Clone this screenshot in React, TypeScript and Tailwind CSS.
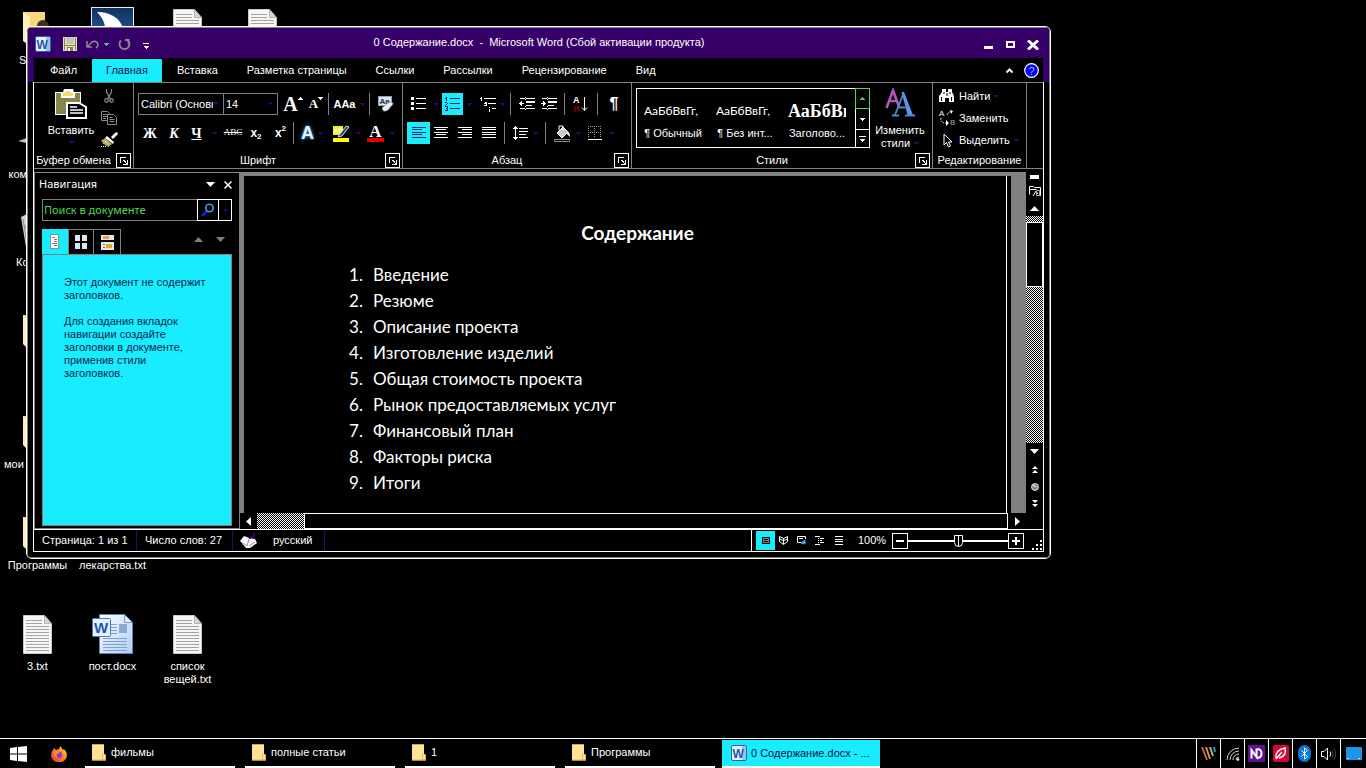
import React, { useState } from 'react';

const UI = 'font-["Liberation_Sans",Arial,sans-serif]';

const TABS = ['Файл', 'Главная', 'Вставка', 'Разметка страницы', 'Ссылки', 'Рассылки', 'Рецензирование', 'Вид'];

const CONTENTS = [
  'Введение',
  'Резюме',
  'Описание проекта',
  'Изготовление изделий',
  'Общая стоимость проекта',
  'Рынок предоставляемых услуг',
  'Финансовый план',
  'Факторы риска',
  'Итоги',
];

const FOLDERS = ['фильмы', 'полные статьи', '1', 'Программы'];

/* ---------- small shared parts ---------- */

const Caret = ({ className = 'text-[#37006e]' }: { className?: string }) => (
  <svg width="5" height="3" viewBox="0 0 5 3" className={`shrink-0 ${className}`} shapeRendering="crispEdges">
    <path d="M0 0h5v1h-1v1h-1v1h-1v-1h-1v-1h-1z" fill="currentColor" />
  </svg>
);

const Tri = ({ up = false, className = 'text-white' }: { up?: boolean; className?: string }) => (
  <svg width="9" height="5" viewBox="0 0 9 5" className={`shrink-0 ${className}`}>
    <path d={up ? 'M0 5L4.500 0L9 5z' : 'M0 0h9L4.500 5z'} fill="currentColor" />
  </svg>
);

const Sep = () => <span className="h-[22px] w-px shrink-0 bg-[#808080]" />;

const Tool = ({ label, className = '', children }: { label: string; className?: string; children: React.ReactNode }) => (
  <button aria-label={label} className={`flex h-[22px] shrink-0 items-center justify-center ${className}`}>
    {children}
  </button>
);

const Launcher = () => (
  <button aria-label="Параметры" className="absolute right-[2px] top-0 flex size-[15px] items-center justify-center border border-white">
    <svg width="8" height="8" viewBox="0 0 8 8" shapeRendering="crispEdges" fill="#fff">
      <path d="M0 0h6v1h-5v5h-1zM3 3h2v1h-2zM4 4h2v1h-2zM5 5h1v1h-1zM7 3h1v5h-5v-1h3v-1h1z" />
    </svg>
  </button>
);

const Group = ({ title, launcher = true, className, children }: { title: string; launcher?: boolean; className: string; children: React.ReactNode }) => (
  <section aria-label={title} className={`flex h-[85px] shrink-0 flex-col border-r border-[#808080] ${className}`}>
    <div className="h-[70px]">{children}</div>
    <div className={`relative h-[15px] text-center leading-[14px] ${launcher ? 'pr-[20px]' : ''}`}>
      {title}
      {launcher && <Launcher />}
    </div>
  </section>
);

/* ---------- icons ---------- */

const WordIcon = () => (
  <svg width="16" height="16" viewBox="0 0 16 16" className="shrink-0">
    <rect x="0.500" y="0.500" width="15" height="15" rx="1.500" fill="#e9f2fc" stroke="#2b62b4" />
    <path d="M11 1h4v14h-4z" fill="#9fc0ea" />
    <text x="1.500" y="12.500" fontSize="12" fontWeight="700" fontFamily="Liberation Sans, Arial, sans-serif" fill="#1c57b0">W</text>
  </svg>
);

const FolderIcon = () => (
  <svg width="14" height="17" viewBox="0 0 14 17" className="shrink-0">
    <path d="M0 0.500h12v10h1.500v6H0z" fill="#f7d977" />
    <path d="M0 0.500h12v15.500H1z" fill="#ffe594" />
    <path d="M10.500 10.500h3v5.500h-3z" fill="#ffe9a8" stroke="#d9b34a" strokeWidth="0.800" />
    <path d="M0 16h13.500" stroke="#d9b34a" />
  </svg>
);

const BigFolder = () => (
  <svg width="29" height="36" viewBox="0 0 29 36">
    <path d="M0 1h22v20h6v14H5z" fill="#f8d67c" />
    <path d="M0 1l5 3v31l-5-5z" fill="#fff0b8" />
  </svg>
);

const UserFolder = () => (
  <svg width="29" height="36" viewBox="0 0 29 36">
    <path d="M0 1h22v20h6v14H5z" fill="#f8d67c" />
    <path d="M0 1l7 5v29l-7-5z" fill="#fff0b8" />
    <circle cx="20" cy="15" r="6" fill="#3a3029" />
    <path d="M16 16h9v6h-9z" fill="#c99368" />
  </svg>
);

const TextFile = () => (
  <svg width="29" height="39" viewBox="0 0 29 39">
    <path d="M0.500 0.500h21l7 8v30h-28z" fill="#f6f6f4" stroke="#c9c9c7" />
    <path d="M21.500 0.500v8h7z" fill="#d5d5d3" stroke="#9d9d9b" strokeWidth="0.700" />
    <path d="M3 5.500h16M3 8.500h16M3 11.500h23M3 14.500h23M3 17.500h23M3 20.500h23M3 23.500h23M3 26.500h23M3 29.500h23M3 32.500h23M3 35.500h23" stroke="#a2a2a0" />
  </svg>
);

const DocFile = () => (
  <svg width="42" height="41" viewBox="0 0 42 41">
    <defs>
      <linearGradient id="docpage" x1="0" y1="0" x2="1" y2="1">
        <stop offset="0" stopColor="#fff" />
        <stop offset="1" stopColor="#aecdf5" />
      </linearGradient>
    </defs>
    <path d="M7.500 0.500h25l8 8v31h-33z" fill="url(#docpage)" stroke="#5d83b8" />
    <path d="M32.500 0.500v8h8z" fill="#dceafc" stroke="#7f9fc9" />
    <path d="M19 10.500h6M19 13.500h6M19 16.500h6M19 19.500h6M11 24.500h24M11 27.500h24M11 30.500h24M11 33.500h24M11 36.500h24" stroke="#7f9fd0" />
    <rect x="27" y="10" width="8" height="9" fill="#8caad6" />
    <rect x="0.500" y="4.500" width="18" height="18" rx="1" fill="#e6f0fc" stroke="#4f7cc0" />
    <text x="2" y="18.500" fontSize="15" fontWeight="700" fontFamily="Liberation Sans, Arial, sans-serif" fill="#1c57b0">W</text>
  </svg>
);

const SharkIcon = () => (
  <svg width="43" height="43" viewBox="0 0 43 43">
    <defs>
      <linearGradient id="fin" x1="0" y1="0" x2="0" y2="1">
        <stop offset="0" stopColor="#10315f" />
        <stop offset="1" stopColor="#2f6cb0" />
      </linearGradient>
    </defs>
    <rect x="0.500" y="0.500" width="42" height="42" fill="url(#fin)" stroke="#e8eef5" />
    <path d="M6 5c13 0 23 6 26 16c0 4 2 8 6 12H14C16 20 13 12 6 5z" fill="#fff" />
  </svg>
);

const ComputerIcon = () => (
  <svg width="40" height="36" viewBox="0 0 40 36">
    <path d="M0 29l12-4v7z" fill="#b9bcc0" />
  </svg>
);

const BinIcon = () => (
  <svg width="34" height="36" viewBox="0 0 34 36">
    <path d="M0 4l6-3h20l8 3l-4 30H5z" fill="#cfd2d6" />
    <path d="M3 12l6 2l-1 8z" fill="#4f93d1" />
    <path d="M2 6l4 26" stroke="#8b8f94" />
  </svg>
);

const PasteIcon = () => (
  <svg width="32" height="30" viewBox="0 0 32 30">
    <path d="M0 3h8l1-3h9l1 3h7v23H0z" fill="#fff" />
    <path d="M1 4h24v21H1z" fill="#87854b" />
    <path d="M6 4h14v5H6z" fill="#fff" />
    <path d="M8 5q5-6 10 0v2H8z" fill="#f2dc6a" />
    <path d="M12 14h12l7 4v11H12z" fill="#000" stroke="#fff" strokeWidth="2" />
    <path d="M15 18h7M15 21h13M15 24h13" stroke="#fff" strokeWidth="1.500" />
  </svg>
);

const CutIcon = () => (
  <svg width="10" height="15" viewBox="0 0 10 15" fill="none" stroke="#8a8a8a" strokeWidth="1.200">
    <path d="M2.500 0v3l4 7M7.500 0v3l-4 7" />
    <circle cx="2.500" cy="11.500" r="1.800" />
    <circle cx="7.500" cy="11.500" r="1.800" />
  </svg>
);

const CopyIcon = () => (
  <svg width="16" height="14" viewBox="0 0 16 14" fill="#000" stroke="#8a8a8a">
    <path d="M0.500 0.500h6l2 2v7h-8z" />
    <path d="M2 3.500h4M2 5.500h4M2 7.500h3" />
    <path d="M6.500 3.500h6l3 3v7h-9z" />
    <path d="M8.500 6.500h3M8.500 8.500h5M8.500 10.500h5" />
  </svg>
);

const BrushIcon = () => (
  <svg width="17" height="16" viewBox="0 0 17 16">
    <path d="M10 5l4-4l2-1l1 2l-5 5z" fill="#fff" />
    <path d="M6 4l7 6l-1 2l-8-6z" fill="#fff" />
    <path d="M4 6l7 6l-4 3L0 9z" fill="#b8ae67" />
    <path d="M0 14.500h5M2 11l3 2M4 9l3 3" stroke="#fff" strokeDasharray="1 1" />
  </svg>
);

const SaveIcon = () => (
  <svg width="14" height="14" viewBox="0 0 14 14" shapeRendering="crispEdges">
    <path d="M0 0h14v14H0z" fill="#e7e3b8" />
    <path d="M1 1h1v12H1zM12 1h1v12h-1z" fill="#87854b" />
    <path d="M3 0h8v7H3z" fill="#c4c4c4" />
    <path d="M2 8h10v1H2z" fill="#87854b" />
    <path d="M4 10h6v4H4z" fill="#87854b" />
    <path d="M5 11h2v3H5z" fill="#fff" />
  </svg>
);

const ListIcon = ({ numbered = false }: { numbered?: boolean }) => (
  <svg width="15" height="14" viewBox="0 0 15 14" fill="currentColor" shapeRendering="crispEdges">
    {numbered ? (
      <path d="M1 0h1v4h-1zM0 1h1v1H0zM0 5h2v1h1v1h-1v1h-1v1h2v1H0v-2h1v-1h1v-1H0zM0 10h3v4H0v-1h2v-1H1v-1h1v-1H0z" />
    ) : (
      <path d="M0 0h3v3H0zM0 5h3v3H0zM0 10h3v3H0z" />
    )}
    <path d="M5 1h10v1H5zM5 6h10v1H5zM5 11h10v1H5z" />
  </svg>
);

const MultiIcon = () => (
  <svg width="16" height="15" viewBox="0 0 16 15" fill="#fff" shapeRendering="crispEdges">
    <path d="M1 0h1v4H1zM0 1h1v1H0zM4 1h12v1H4zM4 5h3v4H4v-1h2v-1H4v-1h2zM8 6h8v1H8zM9 10h1v1H9zM9 12h1v3H9zM12 11h4v1h-4z" />
  </svg>
);

const IndentIcon = ({ right = false }: { right?: boolean }) => (
  <svg width="16" height="14" viewBox="0 0 16 14" fill="#fff" shapeRendering="crispEdges" className="shrink-0">
    <path d="M1 1h5v1H1zM7 1h9v1H7zM7 4h9v2H7zM7 8h6v1H7zM1 11h5v1H1zM7 11h9v1H7zM6 0h1v1H6zM6 2h1v1H6zM6 9h1v1H6zM6 12h1v1H6z" />
    <path d={right ? 'M0 6h2V4h1v1h1v1h1v1H4v1H3v1H2V7H0z' : 'M5 6H3V4H2v1H1v1H0v1h1v1h1v1h1V7h2z'} />
  </svg>
);

const AlignIcon = ({ d }: { d: string }) => (
  <svg width="14" height="12" viewBox="0 0 14 12" stroke="currentColor" shapeRendering="crispEdges">
    <path d={d} />
  </svg>
);

const SpacingIcon = () => (
  <svg width="16" height="14" viewBox="0 0 16 14" fill="#fff" shapeRendering="crispEdges">
    <path d="M2 0h1v1h1v1h1v1H3v8h2v1H4v1H3v1H2v-1H1v-1H0v-1h2V3H0V2h1V1h1zM6 2h9v1H6zM6 5h9v1H6zM6 8h7v1H6zM6 11h9v1H6z" />
  </svg>
);

const BucketIcon = () => (
  <svg width="17" height="17" viewBox="0 0 17 17">
    <path d="M3 8l6-6l5 5l-6 6z" fill="#ccc" stroke="#fff" />
    <path d="M5 5V1h4v4" fill="none" stroke="#fff" />
    <path d="M13 6q3 1 3 6l-3-3z" fill="#fff" />
    <path d="M0.500 14.500h15v2h-15z" fill="#000" stroke="#8a8a8a" />
  </svg>
);

const BordersIcon = () => (
  <svg width="14" height="14" viewBox="0 0 14 14" stroke="#9a9a9a" fill="none" shapeRendering="crispEdges">
    <path d="M0 0.500h14M0 6.500h14M0.500 0v12M6.500 0v12M12.500 0v12" strokeDasharray="1 1" />
    <path d="M0 13.500h14" stroke="#fff" />
  </svg>
);

const ClearIcon = () => (
  <svg width="16" height="16" viewBox="0 0 16 16">
    <rect x="0.500" y="0.500" width="13" height="9" fill="#d8e4f2" stroke="#8da3bd" />
    <text x="1.500" y="8" fontSize="8" fontWeight="700" fontFamily="Liberation Sans, Arial, sans-serif" fill="#1d2d45">Aa</text>
    <path d="M4 12l6-5q5-2 5 1l-5 6q-5 3-6-2z" fill="#e8eef5" stroke="#8fa0b5" strokeWidth="0.700" />
  </svg>
);

const MarkerIcon = () => (
  <svg width="17" height="17" viewBox="0 0 17 17">
    <path d="M0 1h10v9H0z" fill="#f5f500" />
    <text x="1" y="8" fontSize="8" fontWeight="700" fontFamily="Liberation Sans, Arial, sans-serif" fill="#fff">ab</text>
    <path d="M6 10l7-9l3 1l-7 9l-4 1z" fill="#33506f" stroke="#fff" strokeWidth="0.800" />
    <path d="M0 13h16v4H0z" fill="#ffff00" />
  </svg>
);

const SortIcon = () => (
  <svg width="16" height="17" viewBox="0 0 16 17" className="overflow-visible">
    <text x="0" y="7" fontSize="9" fontWeight="700" fontFamily="Liberation Sans, Arial, sans-serif" fill="#fff">А</text>
    <text x="0" y="16" fontSize="9" fontWeight="700" fontFamily="Liberation Sans, Arial, sans-serif" fill="#8b0000">Я</text>
    <path d="M11.500 1v13M9 11.500l2.500 3l2.500-3" stroke="#fff" fill="none" />
  </svg>
);

const BinocularsIcon = () => (
  <svg width="16" height="14" viewBox="0 0 16 14" fill="#fff">
    <path d="M3 0h4v3h2V0h4v3l2 4v6h-5V9H6v4H0V7l3-4z" />
    <path d="M5 3v2M11 3v2M2.500 8v4M12.500 8v4M8 4v3" stroke="#000" />
  </svg>
);

const ReplaceIcon = () => (
  <svg width="17" height="16" viewBox="0 0 17 16" className="overflow-visible">
    <text x="0" y="6" fontSize="8" fontFamily="Liberation Sans, Arial, sans-serif" fill="#fff">A</text>
    <text x="11" y="15" fontSize="8" fontFamily="Liberation Sans, Arial, sans-serif" fill="#aaa">B</text>
    <path d="M8 5q2-4 4-3M2 8q-1 5 5 5" stroke="#fff" fill="none" strokeDasharray="1.500 1" />
    <path d="M11 0l3 1l-2 3zM7 10l3 3l-3 3z" fill="#fff" />
  </svg>
);

const CursorIcon = () => (
  <svg width="10" height="15" viewBox="0 0 10 15">
    <path d="M1 1v11l2.500-2.500l2 4.500l2-1l-2-4h3.500z" fill="#000" stroke="#fff" />
  </svg>
);

// Two overlapping capitals: a thin violet one behind a heavy blue serif one
const ChangeStylesIcon = () => (
  <svg width="30" height="30" viewBox="0 0 30 30" fill="none">
    <path d="M1.500 20L8 2.500L14.500 20M4 13h8.500" stroke="#b455b8" strokeWidth="2.600" />
    <path d="M10 27L18 6.500" stroke="#4f86d0" strokeWidth="1.800" />
    <path d="M16.500 4h2.500L28 27h-5.500z" fill="#5b96e0" />
    <path d="M13 19.500h9M7 27.500h7M20 27.500h10" stroke="#4f86d0" strokeWidth="1.800" />
  </svg>
);

const HelpIcon = () => (
  <svg width="15" height="15" viewBox="0 0 15 15">
    <circle cx="7.500" cy="7.500" r="6.800" fill="#0000f0" stroke="#fff" strokeWidth="1.200" />
    <text x="4.500" y="11.500" fontSize="11" fontFamily="Liberation Sans, Arial, sans-serif" fill="#9fb4ff">?</text>
  </svg>
);

const ProofIcon = () => (
  <svg width="17" height="15" viewBox="0 0 17 15">
    <path d="M0 8l4-5l5 2l6 1l2 4l-7 5h-4z" fill="#fff" />
    <path d="M1 9l6 4l2-7M9 13l6-4" stroke="#7a62a8" fill="none" strokeWidth="0.800" />
    <path d="M9 5l4-1l2-4" stroke="#37006e" fill="none" strokeWidth="2" />
  </svg>
);

/* ---------- ribbon ---------- */

const ClipboardGroup = () => (
  <Group title="Буфер обмена" className="w-[100px]">
    <div className="flex pl-[13px]">
      <button className="flex w-[48px] flex-col items-center pt-[6px]">
        <PasteIcon />
        <span className="leading-[22px]">Вставить</span>
        <Caret />
      </button>
      <div className="flex w-[28px] flex-col items-center pt-[2px]">
        <Tool label="Вырезать"><CutIcon /></Tool>
        <Tool label="Копировать"><CopyIcon /></Tool>
        <Tool label="Формат по образцу"><BrushIcon /></Tool>
      </div>
    </div>
  </Group>
);

const Combo = ({ label, value, className }: { label: string; value: string; className: string }) => (
  <div className={`relative h-[22px] shrink-0 ${className}`}>
    <select
      aria-label={label}
      defaultValue={value}
      className="h-full w-full appearance-none overflow-hidden border border-[#808080] bg-black pl-[2px] pr-[10px] text-white outline-none"
    >
      <option>{value}</option>
    </select>
    <Caret className="pointer-events-none absolute right-[5px] top-[9px] text-[#37006e]" />
  </div>
);

const FontGroup = () => (
  <Group title="Шрифт" className="w-[269px]">
    <div className="flex flex-col gap-[7px] pl-1 pt-[10px]">
      <div className="flex items-center">
        <Combo label="Шрифт" value="Calibri (Основн" className="w-[86px]" />
        <Combo label="Размер шрифта" value="14" className="-ml-px w-[55px]" />
        <Tool label="Увеличить размер" className="ml-1 w-[22px] font-['Liberation_Serif',serif] text-[20px] font-bold">
          A<Caret className="-mt-3 rotate-180 text-white" />
        </Tool>
        <Tool label="Уменьшить размер" className="w-[24px] font-['Liberation_Serif',serif] text-[13px] font-bold">
          A<Caret className="-mt-3 text-white" />
        </Tool>
        <Sep />
        <Tool label="Регистр" className="w-[40px] gap-1 text-[11px] font-bold"><span>AAa</span><Caret /></Tool>
        <Sep />
        <Tool label="Очистить формат" className="w-[32px]"><ClearIcon /></Tool>
      </div>
      <div className="flex items-center">
        <Tool label="Полужирный" className="w-[24px] font-['Liberation_Serif',serif] text-[14px] font-bold">Ж</Tool>
        <Tool label="Курсив" className="w-[24px] font-['Liberation_Serif',serif] text-[14px] font-bold italic">К</Tool>
        <Tool label="Подчеркнутый" className="w-[36px] gap-[10px] font-['Liberation_Serif',serif] text-[14px] font-bold">
          <span className="underline">Ч</span><Caret />
        </Tool>
        <Tool label="Зачеркнутый" className="w-[22px] font-['Liberation_Serif',serif] text-[9px] line-through">ABC</Tool>
        <Tool label="Подстрочный" className="w-[24px] text-[12px] font-bold">x<span className="mt-2 text-[8px]">2</span></Tool>
        <Tool label="Надстрочный" className="w-[25px] text-[12px] font-bold">x<span className="mb-2 text-[8px]">2</span></Tool>
        <Sep />
        <Tool label="Эффекты текста" className="w-[36px] gap-1 text-[18px] font-bold text-[#e3f3ff]">
          <span className="[text-shadow:0_0_2px_#2d8fd8,0_0_4px_#2d8fd8]">A</span><Caret />
        </Tool>
        <Tool label="Выделение цветом" className="w-[34px] gap-[6px]"><MarkerIcon /><Caret /></Tool>
        <Tool label="Цвет текста" className="w-[34px] gap-[6px]">
          <span className="flex h-[17px] w-[17px] flex-col items-center border-b-4 border-[#e00000] font-['Liberation_Serif',serif] text-[17px] font-bold leading-[13px]">A</span>
          <Caret />
        </Tool>
      </div>
    </div>
  </Group>
);

const ParagraphGroup = () => (
  <Group title="Абзац" className="w-[229px]">
    <div className="flex flex-col gap-[7px] pl-1 pt-[10px]">
      <div className="flex items-center">
        <Tool label="Маркеры" className="w-[35px] gap-2"><ListIcon /><Caret /></Tool>
        <Tool label="Нумерация" className="w-[21px] bg-[#1aecff] text-[#002b66]"><ListIcon numbered /></Tool>
        <Tool label="Список" className="w-[12px]"><Caret /></Tool>
        <Tool label="Многоуровневый список" className="w-[35px] gap-1"><MultiIcon /><Caret /></Tool>
        <Sep />
        <Tool label="Уменьшить отступ" className="w-[27px] pl-1"><IndentIcon /></Tool>
        <Tool label="Увеличить отступ" className="w-[26px] pr-1"><IndentIcon right /></Tool>
        <Sep />
        <Tool label="Сортировка" className="w-[32px]"><SortIcon /></Tool>
        <Sep />
        <Tool label="Знаки" className="w-[32px] text-[16px] font-bold">¶</Tool>
      </div>
      <div className="flex items-center">
        <Tool label="По левому краю" className="w-[23px] bg-[#1aecff] text-[#002b66]">
          <AlignIcon d="M0 0.500h14M0 2.500h10M0 5.500h14M0 7.500h10M0 10.500h14" />
        </Tool>
        <Tool label="По центру" className="w-[22px]"><AlignIcon d="M0 0.500h14M2 2.500h10M0 5.500h14M2 7.500h10M0 10.500h14" /></Tool>
        <Tool label="По правому краю" className="w-[26px]"><AlignIcon d="M0 0.500h14M4 2.500h10M0 5.500h14M4 7.500h10M0 10.500h14" /></Tool>
        <Tool label="По ширине" className="w-[22px]"><AlignIcon d="M0 0.500h14M0 2.500h14M0 5.500h14M0 7.500h14M0 10.500h14" /></Tool>
        <span className="w-1" />
        <Sep />
        <Tool label="Интервал" className="w-[40px] gap-1"><SpacingIcon /><Caret /></Tool>
        <Sep />
        <Tool label="Заливка" className="w-[42px] gap-[5px]"><BucketIcon /><Caret /></Tool>
        <Tool label="Границы" className="w-[26px] gap-[7px]"><BordersIcon /><Caret /></Tool>
      </div>
    </div>
  </Group>
);

const StyleItem = ({ sample, name, className }: { sample: string; name: string; className: string }) => (
  <button className="flex w-[72px] shrink-0 flex-col items-center pt-[10px]">
    <span className={`h-[24px] w-[58px] overflow-hidden whitespace-nowrap text-left leading-[24px] ${className}`}>{sample}</span>
    <span className="leading-[20px]">{name}</span>
  </button>
);

const StylesGroup = () => (
  <Group title="Стили" className="w-[301px]">
    <div className="flex pl-1 pt-[5px]">
      <div className="flex h-[60px] w-[219px] border border-white border-r-0">
        <StyleItem sample="АаБбВвГг," name="¶ Обычный" className="font-['Lato',sans-serif] text-[12px]" />
        <StyleItem sample="АаБбВвГг," name="¶ Без инт..." className="font-['Lato',sans-serif] text-[12px]" />
        <StyleItem sample="АаБбВв" name="Заголово..." className="font-['Liberation_Serif',serif] text-[18px] font-bold" />
      </div>
      <div className="flex h-[60px] w-[15px] flex-col">
        <button aria-label="Вверх" className="flex h-[21px] items-center justify-center border border-[#4fd84f]">
          <Caret className="rotate-180 text-[#4fd84f]" />
        </button>
        <button aria-label="Вниз" className="flex h-[20px] items-center justify-center border-x border-white"><Caret className="text-white" /></button>
        <button aria-label="Ещё" className="flex h-[19px] flex-col items-center justify-center gap-[2px] border border-white">
          <span className="h-px w-[7px] bg-white" />
          <Caret className="text-white" />
        </button>
      </div>
      <button className="flex w-[60px] flex-col items-center leading-[13px]">
        <ChangeStylesIcon />
        <span className="mt-[6px]">Изменить</span>
        <span className="flex items-center gap-1">стили <Caret /></span>
      </button>
    </div>
  </Group>
);

const EditingGroup = () => (
  <Group title="Редактирование" launcher={false} className="w-[94px]">
    <div className="flex flex-col pl-[6px] pt-[2px]">
      <button className="flex h-[22px] items-center"><span className="w-[20px]"><BinocularsIcon /></span>Найти<span className="ml-1"><Caret /></span></button>
      <button className="flex h-[22px] items-center"><span className="w-[20px]"><ReplaceIcon /></span>Заменить</button>
      <button className="flex h-[22px] items-center"><span className="w-[20px] pl-1"><CursorIcon /></span>Выделить<span className="ml-1"><Caret /></span></button>
    </div>
  </Group>
);

/* ---------- window parts ---------- */

const TitleBar = () => (
  <header className="relative flex h-[30px] shrink-0 items-center bg-[#370068] pl-[7px] pt-[2px]">
    <WordIcon />
    <button aria-label="Сохранить" className="ml-3"><SaveIcon /></button>
    <button aria-label="Отменить" className="ml-[9px] flex items-center gap-[5px]">
      <svg width="13" height="9" viewBox="0 0 13 9" fill="none" stroke="#8c8c8c" strokeWidth="1.500">
        <path d="M1 1v6h5M1.500 6.500L6 2q4-2 6 2q0 3-2 4" />
      </svg>
      <Caret className="text-[#45c98a]" />
    </button>
    <button aria-label="Повторить" className="ml-[9px]">
      <svg width="13" height="13" viewBox="0 0 13 13" fill="none" stroke="#8c8c8c" strokeWidth="1.800">
        <path d="M3 2.500a5 5 0 1 0 7 0M10.500 6V2H7" />
      </svg>
    </button>
    <button aria-label="Настройка панели" className="ml-3 mt-1 flex flex-col items-center gap-[2px]">
      <span className="h-px w-[6px] bg-white" />
      <Caret className="text-white" />
    </button>
    <h1 className="flex-1 pb-1 pr-[120px] text-center">0 Содержание.docx&nbsp; -&nbsp; Microsoft Word (Сбой активации продукта)</h1>
    <div className="absolute right-[10px] top-[10px] flex items-center gap-3">
      <button aria-label="Свернуть" className="flex h-[13px] w-[10px] items-end pb-[2px]"><span className="h-[3px] w-[9px] bg-white" /></button>
      <button aria-label="Развернуть" className="h-[7px] w-[9px] border-2 border-white" />
      <button aria-label="Закрыть">
        <svg width="12" height="10" viewBox="0 0 12 10" stroke="#fff" strokeWidth="3"><path d="M1 0.500l10 9M11 0.500l-10 9" /></svg>
      </button>
    </div>
  </header>
);

const TabStrip = () => {
  const [active, setActive] = useState('Главная');
  return (
    <div className="h-6 shrink-0 bg-[#370068] px-[6px]">
      <nav className="flex h-full items-center gap-px bg-black pl-[2px] pr-1 pt-px">
        {TABS.map(t => (
          <button
            key={t}
            onClick={() => setActive(t)}
            className={`h-[23px] px-[14px] ${t === active ? 'bg-[#1aecff] text-[#101048]' : 'text-white'}`}
          >
            {t}
          </button>
        ))}
        <button aria-label="Свернуть ленту" className="ml-auto mr-[10px]">
          <svg width="7" height="5" viewBox="0 0 7 5" fill="none" stroke="#fff" strokeWidth="2"><path d="M0.500 4.500l3-3l3 3" /></svg>
        </button>
        <button aria-label="Справка"><HelpIcon /></button>
      </nav>
    </div>
  );
};

const NavPane = () => (
  <aside className="flex w-[205px] shrink-0 flex-col border-y border-l border-[#808080] pl-[7px] pr-[7px]">
    <div className="-ml-[3px] flex h-[23px] items-center font-['Noto_Sans',sans-serif]">
      <h2 className="flex-1">Навигация</h2>
      <button aria-label="Параметры области"><Tri /></button>
      <button aria-label="Закрыть область" className="ml-[9px]">
        <svg width="8" height="8" viewBox="0 0 8 8" stroke="#fff" strokeWidth="1.500"><path d="M0.500 0.500l7 7M7.500 0.500l-7 7" /></svg>
      </button>
    </div>
    <div className="mt-[3px] flex h-[22px]">
      <input
        aria-label="Поиск в документе"
        placeholder="Поиск в документе"
        className="w-0 flex-1 border border-r-0 border-[#808080] bg-black px-px font-['Noto_Sans',sans-serif] text-white outline-none placeholder:text-[#4fd84f]"
      />
      <button aria-label="Найти" className="flex w-[22px] items-center justify-center border border-white">
        <svg width="14" height="14" viewBox="0 0 14 14" fill="none">
          <path d="M1 13l5-5" stroke="#2222c8" strokeWidth="2.500" />
          <circle cx="8.500" cy="5" r="3.800" stroke="#4f9cf0" strokeWidth="1.500" />
        </svg>
      </button>
      <button aria-label="Варианты поиска" className="flex w-[13px] items-center justify-center border border-l-0 border-white"><Caret /></button>
    </div>
    <div className="mt-2 flex h-[25px]">
      <button aria-label="Заголовки" className="flex w-[26px] items-center justify-center bg-[#1aecff]">
        <svg width="10" height="15" viewBox="0 0 10 15" shapeRendering="crispEdges">
          <path d="M0.500 0.500h8v14h-8z" fill="#fff" stroke="#8d8d8d" />
          <path d="M2 3.500h3M4 5.500h3M4 7.500h3M2 9.500h5M4 11.500h3" stroke="#777" />
        </svg>
      </button>
      <button aria-label="Страницы" className="flex w-[26px] items-center justify-center border border-b-0 border-[#808080]">
        <svg width="13" height="14" viewBox="0 0 13 14" fill="#dbe6f5" shapeRendering="crispEdges"><path d="M0 0h5v6H0zM7 0h5v6H7zM0 8h5v6H0zM7 8h5v6H7z" /></svg>
      </button>
      <button aria-label="Результаты" className="flex w-[27px] items-center justify-center border border-b-0 border-l-0 border-[#808080]">
        <svg width="13" height="15" viewBox="0 0 13 15" shapeRendering="crispEdges">
          <path d="M0 0h13v5H0zM0 7h13v8H0z" fill="#e8e8ec" />
          <path d="M2 1h6v3H2zM5 9h6v4H5z" fill="#e0a437" />
          <path d="M2 9h2v1H2zM2 12h2v1H2z" fill="#777" />
        </svg>
      </button>
      <div className="ml-auto flex gap-[13px] pr-[7px] pt-2">
        <button aria-label="Предыдущий" className="h-[5px]"><Tri up className="text-[#808080]" /></button>
        <button aria-label="Следующий" className="h-[5px]"><Tri className="text-[#808080]" /></button>
      </div>
    </div>
    <div className="mb-[2px] flex-1 border border-[#808080] bg-[#1aecff] px-[21px] pt-[21px] leading-[13px] text-[#06284a]">
      <p>Этот документ не содержит заголовков.</p>
      <p className="mt-[13px] pr-4">Для создания вкладок навигации создайте заголовки в документе, применив стили заголовков.</p>
    </div>
  </aside>
);

const Checker = ({ className }: { className: string }) => (
  <span className={`block bg-[repeating-conic-gradient(#000_0_25%,#fff_0_50%)] bg-[length:2px_2px] ${className}`} />
);

const VScroll = () => (
  <div className="flex w-[17px] shrink-0 flex-col items-center">
    <span className="mt-[3px] h-1 w-[9px] shrink-0 bg-white" />
    <button aria-label="Линейка" className="mt-[6px] shrink-0">
      <svg width="12" height="12" viewBox="0 0 12 12" fill="none" stroke="#fff"><path d="M0.500 9.500v-8h4l1 1h6v8h-3M0.500 4.500h7M4 11l3-5l2 3" /><path d="M7.500 5.500h3v5h-3z" stroke="#aaa" /></svg>
    </button>
    <button aria-label="Прокрутить вверх" className="flex h-[19px] shrink-0 items-center pt-1"><Tri up /></button>
    <Checker className="h-[6px] w-full shrink-0" />
    <span className="h-[65px] w-full shrink-0 border border-white" />
    <Checker className="w-full flex-1" />
    <button aria-label="Прокрутить вниз" className="flex h-[17px] shrink-0 items-center"><Tri /></button>
    <div className="flex h-[53px] shrink-0 flex-col items-center justify-between pb-[6px] pt-[6px]">
      <button aria-label="Предыдущая страница">
        <svg width="6" height="8" viewBox="0 0 6 8" fill="#fff"><path d="M3 0l3 3H0zM3 4l3 3H0z" /></svg>
      </button>
      <button aria-label="Объект перехода">
        <svg width="8" height="8" viewBox="0 0 8 8"><circle cx="4" cy="4" r="3.500" fill="#8a8a8a" stroke="#fff" strokeWidth="0.800" /><path d="M2 2l3 2" stroke="#fff" /></svg>
      </button>
      <button aria-label="Следующая страница">
        <svg width="6" height="8" viewBox="0 0 6 8" fill="#fff"><path d="M0 1h6l-3 3zM0 5h6l-3 3z" /></svg>
      </button>
    </div>
    <span className="h-4 shrink-0" />
  </div>
);

const DocumentArea = () => (
  <main className="flex min-w-0 flex-1 flex-col">
    <div className="flex min-h-0 flex-1 border-l-[5px] border-t-4 border-[#808080]">
      <article className="min-w-0 flex-1 overflow-hidden border-r border-white pl-[105px] font-['Lato',sans-serif]">
        <h2 className="pr-[80px] pt-[44px] text-center text-[19px] font-bold leading-[26px]">Содержание</h2>
        <ol className="mt-4 text-[17px] leading-[26px]">
          {CONTENTS.map((item, i) => (
            <li key={item} className="flex"><span className="w-6 shrink-0">{i + 1}.</span>{item}</li>
          ))}
        </ol>
      </article>
      <span className="w-1" />
      <span className="w-[15px] bg-[#808080]" />
    </div>
    <div className="flex h-4 shrink-0 border-l border-[#808080]">
      <button aria-label="Прокрутить влево" className="flex w-[17px] items-center justify-center">
        <svg width="5" height="9" viewBox="0 0 5 9" fill="#fff"><path d="M5 0v9L0 4.500z" /></svg>
      </button>
      <Checker className="w-[47px]" />
      <span className="flex-1 border border-white" />
      <button aria-label="Прокрутить вправо" className="flex w-[18px] items-center justify-center">
        <svg width="5" height="9" viewBox="0 0 5 9" fill="#fff"><path d="M0 0v9l5-4.500z" /></svg>
      </button>
    </div>
  </main>
);

const StatusBar = () => {
  const [zoom, setZoom] = useState(50);
  return (
    <footer className="flex h-[22px] shrink-0 items-center border-t border-white">
      <span className="h-full w-[103px] border-r border-[#37006e] pl-2 leading-[21px]">Страница: 1 из 1</span>
      <span className="h-full w-[96px] border-r border-[#37006e] pl-2 leading-[21px]">Число слов: 27</span>
      <span className="flex h-full w-[92px] items-center gap-4 border-r border-[#37006e] pl-[7px]"><ProofIcon />русский</span>
      <div className="ml-auto flex h-full items-center border-l border-white pl-1">
        <button aria-label="Разметка страницы" className="flex h-[19px] w-[19px] items-center justify-center bg-[#1aecff]">
          <svg width="8" height="7" viewBox="0 0 8 7" shapeRendering="crispEdges"><path d="M0.500 0.500h7v6h-7z" fill="#777" stroke="#111" /><path d="M2 2.500h4M2 4.500h4" stroke="#111" /></svg>
        </button>
        <div className="flex items-center gap-[9px] pl-[4px]">
          <button aria-label="Режим чтения">
            <svg width="9" height="9" viewBox="0 0 9 9" fill="none" stroke="#fff"><path d="M0.500 0.500l4 2l4-2v5l-4 3l-4-3zM4.500 2v6M1 3l3 1.500M8 3l-3 1.500" /></svg>
          </button>
          <button aria-label="Веб-документ">
            <svg width="9" height="9" viewBox="0 0 9 9" fill="none" stroke="#fff"><path d="M8.500 3V0.500h-8v6H4M2 2.500h4" /><path d="M4 7l4-3v4z" fill="#3fa9f5" stroke="#3fa9f5" /></svg>
          </button>
          <button aria-label="Структура">
            <svg width="9" height="9" viewBox="0 0 9 9" stroke="#fff" shapeRendering="crispEdges"><path d="M0 0.500h5M3 2.500h1M5 2.500h4M3 4.500h1M5 4.500h2M3 6.500h1M5 6.500h4M0 8.500h5" /></svg>
          </button>
          <button aria-label="Черновик" className="pl-[2px]">
            <svg width="8" height="9" viewBox="0 0 8 9" stroke="#fff" shapeRendering="crispEdges"><path d="M0 0.500h8M0 3.500h8M0 5.500h8M0 8.500h8" /></svg>
          </button>
        </div>
        <button className="ml-[15px] w-[34px] text-left">100%</button>
        <button aria-label="Уменьшить" className="flex size-4 items-center justify-center border border-white"><span className="h-[2px] w-2 bg-white" /></button>
        <input
          type="range"
          aria-label="Масштаб"
          value={zoom}
          onChange={e => setZoom(Number(e.target.value))}
          className="h-4 w-[100px] appearance-none bg-[linear-gradient(#fff,#fff)] bg-[length:100%_2px] bg-center bg-no-repeat [&::-webkit-slider-thumb]:h-[12px] [&::-webkit-slider-thumb]:w-[9px] [&::-webkit-slider-thumb]:appearance-none [&::-webkit-slider-thumb]:rounded-b-[5px] [&::-webkit-slider-thumb]:border [&::-webkit-slider-thumb]:border-white [&::-webkit-slider-thumb]:bg-[linear-gradient(90deg,#000_3px,#fff_3px,#fff_4px,#000_4px)]"
        />
        <button aria-label="Увеличить" className="flex size-4 items-center justify-center border border-white">
          <svg width="8" height="8" viewBox="0 0 8 8" stroke="#fff" strokeWidth="2"><path d="M0 4h8M4 0v8" /></svg>
        </button>
        <svg width="12" height="12" viewBox="0 0 12 12" fill="#fff" className="ml-[7px] self-end" shapeRendering="crispEdges">
          <path d="M9 1h2v2H9zM5 5h2v2H5zM9 5h2v2H9zM1 9h2v2H1zM5 9h2v2H5zM9 9h2v2H9z" />
        </svg>
      </div>
    </footer>
  );
};

const WordWindow = () => (
  <div className="absolute left-[26px] top-[26px] h-[533px] w-[1025px] overflow-hidden rounded-[6px] border border-white bg-black">
    <div className="flex h-full flex-col border border-[#808080]">
      <TitleBar />
      <TabStrip />
      <div className="mx-[5px] mb-[5px] flex min-h-0 flex-1 flex-col border-x border-b border-white">
        <div className="flex shrink-0 border-y border-[#808080]">
          <ClipboardGroup />
          <FontGroup />
          <ParagraphGroup />
          <StylesGroup />
          <EditingGroup />
        </div>
        <div className="flex min-h-0 flex-1 pt-[3px]">
          <NavPane />
          <DocumentArea />
          <VScroll />
        </div>
        <StatusBar />
      </div>
    </div>
  </div>
);

/* ---------- desktop ---------- */

const Shortcut = ({ icon, label, className = 'text-center' }: { icon?: React.ReactNode; label: string; className?: string }) => (
  <div className="flex h-[101px] w-[75px] flex-col items-center">
    <div className="flex h-[43px] shrink-0 items-center justify-center">{icon}</div>
    <span className={`mt-1 whitespace-pre leading-[13px] ${className}`}>{label}</span>
  </div>
);

const Desktop = () => (
  <div className="grid grid-cols-[repeat(4,75px)] pt-[7px]">
    <Shortcut icon={<UserFolder />} label="S" className="w-[37px]" />
    <Shortcut icon={<SharkIcon />} label="" />
    <Shortcut icon={<TextFile />} label="" />
    <Shortcut icon={<TextFile />} label="" />
    <Shortcut icon={<ComputerIcon />} label={'\nком'} className="w-[58px]" />
    <span className="col-span-3" />
    <Shortcut icon={<BinIcon />} label="Ко" className="w-[43px]" />
    <span className="col-span-3" />
    <Shortcut icon={<BigFolder />} label="" />
    <span className="col-span-3" />
    <Shortcut icon={<BigFolder />} label="мои" className="w-[67px]" />
    <span className="col-span-3" />
    <Shortcut icon={<BigFolder />} label="Программы" />
    <Shortcut label="лекарства.txt" />
    <span className="col-span-2" />
    <Shortcut icon={<TextFile />} label="3.txt" />
    <Shortcut icon={<DocFile />} label="пост.docx" />
    <Shortcut icon={<TextFile />} label={'список\nвещей.txt'} />
  </div>
);

const TrayItem = ({ label, children }: { label: string; children: React.ReactNode }) => (
  <button aria-label={label} className="flex h-full w-6 items-center justify-center border-l border-white">{children}</button>
);

const Taskbar = () => (
  <footer className="flex h-[30px] shrink-0 border-t border-white bg-black">
    <button aria-label="Пуск" className="flex w-[36px] items-center justify-center">
      <svg width="17" height="16" viewBox="0 0 17 16" fill="#fff"><path d="M0 2l7-1v6.500H0zM8 1l9-1v7.500H8zM0 8.500h7V15l-7-1zM8 8.500h9V16l-9-1z" /></svg>
    </button>
    <button aria-label="Firefox" className="flex w-[44px] items-center justify-center pl-px">
      <svg width="16" height="16" viewBox="0 0 16 16">
        <defs>
          <linearGradient id="ff" x1="1" y1="0" x2="0" y2="1">
            <stop offset="0" stopColor="#ffe226" /><stop offset="0.500" stopColor="#ff7a1f" /><stop offset="1" stopColor="#e3246a" />
          </linearGradient>
        </defs>
        <path d="M2 4l1-2l2 2l3-1l1-3q2 2 3 4l1-1q3 3 3 6a8 7.500 0 0 1-16 0q0-3 2-5z" fill="url(#ff)" />
        <circle cx="8" cy="9" r="3.200" fill="#8440c8" />
        <path d="M2 6q4-2 7 1l-3 1q-1 3 2 4q-5 0-6-6z" fill="#ff8a26" />
      </svg>
    </button>
    {FOLDERS.map(f => (
      <button key={f} className="mx-[5px] flex w-[150px] items-center gap-[5px] border-b-2 border-white pl-[7px]">
        <FolderIcon />{f}
      </button>
    ))}
    <button className="ml-[2px] mt-px flex w-[158px] items-center gap-1 whitespace-nowrap border-b-2 border-white bg-[#1aecff] pl-[9px] text-[#101048]">
      <WordIcon />0 Содержание.docx - ...
    </button>
    <div className="ml-auto flex">
      <TrayItem label="Монитор">
        <svg width="16" height="14" viewBox="0 0 16 14" strokeWidth="1.800"><path d="M1 0l5 13" stroke="#d9694a" /><path d="M5 0l4 12" stroke="#e8975c" /><path d="M9 0l3 9" stroke="#b7c48b" /><path d="M13 0l1 5" stroke="#4c9ea8" /></svg>
      </TrayItem>
      <TrayItem label="Сеть">
        <svg width="14" height="14" viewBox="0 0 14 14" fill="none" stroke="#cfcfcf"><path d="M1 13a12 12 0 0 1 12-12M4 13a9 9 0 0 1 9-9M7 13a6 6 0 0 1 6-6M10 13a3 3 0 0 1 3-3" /><circle cx="12" cy="12.500" r="1" fill="#fff" /></svg>
      </TrayItem>
      <TrayItem label="NVDA">
        <svg width="17" height="17" viewBox="0 0 17 17"><rect width="17" height="17" fill="#5b168c" /><path d="M3.500 13.500V5l5 7V4.500q5-1 5 4t-5 4" fill="none" stroke="#fff" strokeWidth="2" /></svg>
      </TrayItem>
      <TrayItem label="Avira">
        <svg width="16" height="17" viewBox="0 0 16 17"><rect width="16" height="17" rx="2" fill="#d3073a" /><path d="M3 13q-1-8 9-10q2 8-6 10M3 14l6-7" fill="none" stroke="#fff" strokeWidth="1.500" /></svg>
      </TrayItem>
      <TrayItem label="Bluetooth">
        <svg width="13" height="17" viewBox="0 0 13 17"><rect width="13" height="17" rx="6.500" fill="#0a78d7" /><path d="M3.500 5.500l6 6l-3 2.500V3l3 2.500l-6 6" fill="none" stroke="#fff" /></svg>
      </TrayItem>
      <TrayItem label="Громкость">
        <svg width="16" height="14" viewBox="0 0 16 14" fill="none" stroke="#fff"><path d="M0.500 4.500H3L6.500 1v12L3 9.500H0.500z" /><path d="M9 4.500q1.500 2.500 0 5" /><path d="M11 3q2.500 4 0 8M13 1.500q3.500 5.500 0 11" stroke="#444" /></svg>
      </TrayItem>
      <button aria-label="Рабочий стол" className="flex w-[26px] items-center justify-center border-l border-white">
        <svg width="16" height="13" viewBox="0 0 16 13"><rect width="16" height="13" rx="1" fill="#1f95e8" /><path d="M1 11.500h14" stroke="#bfe3ff" strokeDasharray="2 9" /></svg>
      </button>
    </div>
  </footer>
);

export default function App() {
  return (
    <div className={`flex min-h-screen flex-col bg-black text-[11px] text-white ${UI}`}>
      <div className="relative flex-1 overflow-hidden">
        <Desktop />
        <WordWindow />
      </div>
      <Taskbar />
    </div>
  );
}
